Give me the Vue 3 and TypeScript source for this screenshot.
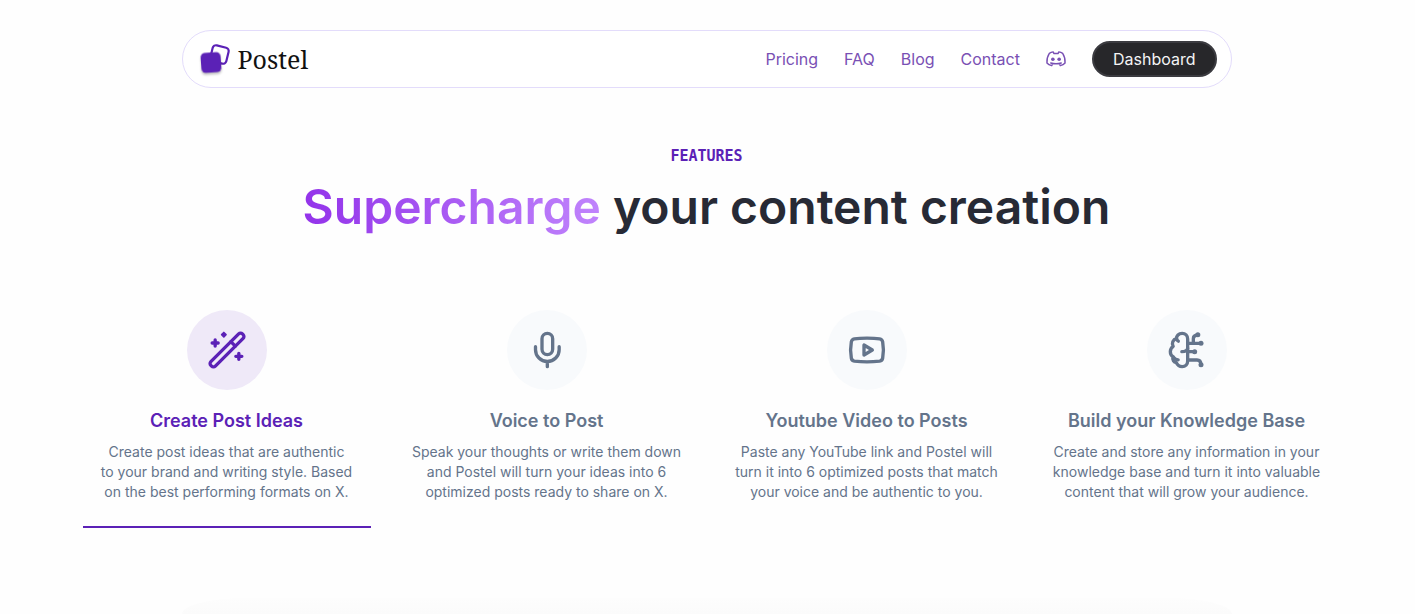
<script setup lang="ts">
import { ref } from 'vue'

interface NavLink {
  label: string
  href: string
}

type IconName = 'wand' | 'mic' | 'video' | 'brain'

interface Feature {
  icon: IconName
  title: string
  lines: string[]
}

const links: NavLink[] = [
  { label: 'Pricing', href: '#pricing' },
  { label: 'FAQ', href: '#faq' },
  { label: 'Blog', href: '#blog' },
  { label: 'Contact', href: '#contact' },
]

const features: Feature[] = [
  {
    icon: 'wand',
    title: 'Create Post Ideas',
    lines: ['Create post ideas that are authentic', 'to your brand and writing style. Based', 'on the best performing formats on X.'],
  },
  {
    icon: 'mic',
    title: 'Voice to Post',
    lines: ['Speak your thoughts or write them down', 'and Postel will turn your ideas into 6', 'optimized posts ready to share on X.'],
  },
  {
    icon: 'video',
    title: 'Youtube Video to Posts',
    lines: ['Paste any YouTube link and Postel will', 'turn it into 6 optimized posts that match', 'your voice and be authentic to you.'],
  },
  {
    icon: 'brain',
    title: 'Build your Knowledge Base',
    lines: ['Create and store any information in your', 'knowledge base and turn it into valuable', 'content that will grow your audience.'],
  },
]

const active = ref(0)
</script>

<template>
  <div class="page">
    <header class="bar">
      <a class="brand" href="#home">
        <svg class="logo" viewBox="0 0 32 32" aria-hidden="true">
          <rect x="12.3" y="3.3" width="16.4" height="16.4" rx="3.4" transform="rotate(14 20.5 11.5)" fill="#fff" stroke="#5b21b6" stroke-width="2.2" />
          <rect class="tile" x="2" y="9.5" width="20" height="20" rx="4.4" transform="rotate(-4 12 19.5)" fill="#5b21b6" />
        </svg>
        <span>Postel</span>
      </a>
      <nav class="nav" aria-label="Main">
        <a v-for="link in links" :key="link.label" :href="link.href">{{ link.label }}</a>
        <a class="discord" href="#discord" aria-label="Discord">
          <svg viewBox="1.5 1.5 21 21" aria-hidden="true">
            <path d="M15.5 17l1 2c2-.4 3.8-1.3 5-2.8c.3-4-.6-7.3-2.5-10.2c-1.2-.8-2.6-1.3-4-1.5l-.9 1.8c-1.4-.2-2.8-.2-4.2 0l-.9-1.8c-1.4.2-2.8.7-4 1.5c-1.9 2.9-2.8 6.2-2.5 10.2c1.2 1.5 3 2.4 5 2.8l1-2M6.5 16.2c3.500 1.100 7.500 1.100 11 0" />
            <circle cx="8.7" cy="12.2" r="1.9" />
            <circle cx="15.3" cy="12.2" r="1.9" />
          </svg>
        </a>
        <button class="cta" type="button">Dashboard</button>
      </nav>
    </header>

    <main>
      <section class="intro">
        <p class="eyebrow">FEATURES</p>
        <h1><span class="shine">Supercharge</span> your content creation</h1>
      </section>

      <section class="features">
        <button
          v-for="(feature, i) in features"
          :key="feature.title"
          type="button"
          class="feature"
          :class="{ active: active === i }"
          :aria-pressed="active === i"
          @click="active = i"
        >
          <span class="disc">
            <svg v-if="feature.icon === 'wand'" viewBox="0 0 24 24" aria-hidden="true">
              <rect x="-1.4" y="10.1" width="26.8" height="3.8" rx="1.6" transform="rotate(-45 12 12)" />
              <path d="M14.3 7l2.7 2.7" />
              <path class="spark" d="M4.9 6v3.6M3.1 7.8h3.6M19.1 14v3.600M17.3 15.8h3.600" />
              <path class="solid" d="M10.1 1.500l1.300 1.300-1.300 1.300-1.300-1.300z" />
            </svg>
            <svg v-else-if="feature.icon === 'mic'" viewBox="0 0 24 24" aria-hidden="true">
              <rect x="9" y="2" width="6.400" height="12.800" rx="3.200" />
              <path d="M5.1 10v1.8a7.1 7.1 0 0 0 14.2 0V10M12.2 19v3" />
            </svg>
            <svg v-else-if="feature.icon === 'video'" viewBox="0 0 24 24" aria-hidden="true">
              <path d="M12 4.9c2.8 0 5.4.1 7.6.4c1.1.2 1.600.7 1.800 1.800c.6 3.200.6 6.600 0 9.800c-.2 1.100-.7 1.600-1.800 1.800c-5 .6-10.200.6-15.200 0c-1.100-.2-1.600-.7-1.800-1.800c-.6-3.200-.6-6.600 0-9.800c.2-1.100.7-1.600 1.800-1.800c2.200-.3 4.800-.4 7.600-.4z" />
              <path d="M10.2 9v6l5-3z" />
            </svg>
            <svg v-else viewBox="0 0 24 24" aria-hidden="true">
              <path d="M12.4 5.4C12.4 3.4 11 2 9.1 2C7 2 5.6 3.5 5.7 5.2C3.6 5.6 2.6 7.9 3.7 9.8C1.4 11.4 1.5 14.8 3.6 16C3 18.2 4.2 19.4 5.6 19.6C6.3 21.2 7.4 22 9.1 22C11 22 12.4 20.6 12.4 18.6Z" />
              <path d="M5.7 4.8C5.7 5.7 6.1 6.3 6.8 6.7M4 16.4C4.7 17.4 5.6 17.9 6.7 17.9M8.9 13C10.6 13 12.1 12.4 12.4 11" />
              <path d="M12.4 8H20M15.800 8V5.200C15.800 4 16.700 3.200 18 3M12.400 13H16.400M12.400 18H18C19.500 18 20.300 18.800 20.300 20.600" />
              <circle class="dot" cx="18.5" cy="2.9" r="1.5" />
              <circle class="dot" cx="20.4" cy="8" r="1.5" />
              <circle class="dot" cx="16.6" cy="13" r="1.5" />
              <circle class="dot" cx="20.4" cy="20.8" r="1.5" />
            </svg>
          </span>
          <span class="title">{{ feature.title }}</span>
          <span class="text"><span v-for="line in feature.lines" :key="line" class="line">{{ line }}</span></span>
        </button>
      </section>
    </main>

    <div class="preview-edge" aria-hidden="true"></div>
  </div>
</template>

<style>
body {
  margin: 0;
  background: #fefefe;
}
</style>

<style scoped>
.page {
  min-height: 100vh;
  box-sizing: border-box;
  padding: 30px 34px 0 32px;
  display: flex;
  flex-direction: column;
  align-items: center;
  font-family: Inter, "Liberation Sans", sans-serif;
  color: #272a35;
}

.bar {
  width: 100%;
  max-width: 1050px;
  box-sizing: border-box;
  padding: 10px 14px 10px 16px;
  border: 1px solid #e3dcfb;
  border-radius: 32px;
  display: flex;
  align-items: center;
  justify-content: space-between;
  background: #fff;
}

.brand {
  display: flex;
  align-items: center;
  gap: 7px;
  color: #111;
  text-decoration: none;
  font-family: "Noto Serif", "DejaVu Serif Condensed", "DejaVu Serif", serif;
  font-size: 25px;
  line-height: 36px;
}

.logo {
  width: 32px;
  height: 32px;
  overflow: visible;
}

.tile {
  filter: drop-shadow(0 2px 1px rgba(0, 0, 0, 0.25));
}

.nav {
  display: flex;
  align-items: center;
  gap: 26px;
}

.nav a {
  color: #7950b4;
  text-decoration: none;
  font-size: 16px;
  line-height: 24px;
}

.nav .discord {
  display: flex;
}

.discord svg {
  width: 20px;
  height: 20px;
  overflow: visible;
  fill: none;
  stroke: #7950b4;
  stroke-width: 1.5;
  stroke-linecap: round;
  stroke-linejoin: round;
}

.discord circle {
  fill: #7950b4;
  stroke: none;
}

.cta {
  height: 36px;
  padding: 0 19px;
  border: 2px solid #3b3b40;
  border-radius: 18px;
  background: #27272a;
  color: #f4f4f5;
  font-family: inherit;
  font-size: 16px;
  line-height: 24px;
}

main {
  width: 100%;
  display: flex;
  flex-direction: column;
  align-items: center;
}

.intro {
  margin-top: 56px;
  text-align: center;
}

.eyebrow {
  margin: 0;
  color: #5b21b6;
  font-family: "DejaVu Sans Mono", monospace;
  font-size: 15px;
  font-weight: 700;
  line-height: 24px;
}

h1 {
  margin: 9px 0 0;
  font-size: 48px;
  font-weight: 600;
  line-height: 60px;
}

.shine {
  background: linear-gradient(90deg, #9333ea, #c084fc);
  -webkit-background-clip: text;
  background-clip: text;
  color: transparent;
}

.features {
  width: 100%;
  max-width: 1248px;
  margin-top: 73px;
  display: grid;
  grid-template-columns: repeat(4, 1fr);
  gap: 32px;
}

.feature {
  padding: 0 0 24px;
  border: 0;
  border-bottom: 2px solid transparent;
  background: none;
  color: #64748b;
  font-family: inherit;
  display: flex;
  flex-direction: column;
  align-items: center;
}

.feature.active {
  border-bottom-color: #5b21b6;
}

.disc {
  width: 80px;
  height: 80px;
  border-radius: 50%;
  background: #f8fafc;
  display: flex;
  align-items: center;
  justify-content: center;
}

.active .disc {
  background: #efe9f8;
}

.disc svg {
  width: 40px;
  height: 40px;
  fill: none;
  stroke: currentColor;
  stroke-width: 2;
  stroke-linecap: round;
  stroke-linejoin: round;
}

.active .disc,
.active .title {
  color: #5b21b6;
}

.disc .solid {
  fill: currentColor;
  stroke-width: 1;
}

.disc .dot {
  fill: currentColor;
  stroke: none;
}

.title {
  margin-top: 17px;
  font-size: 18px;
  font-weight: 600;
  line-height: 28px;
}

.text {
  margin-top: 7px;
  font-size: 14px;
  line-height: 20px;
}

.line {
  display: block;
  white-space: nowrap;
}

.preview-edge {
  width: 100%;
  max-width: 1050px;
  height: 16px;
  margin-top: auto;
  border-radius: 64px 64px 0 0 / 16px 16px 0 0;
  background: linear-gradient(#fdfdfd, #fbfbfb);
}
</style>
